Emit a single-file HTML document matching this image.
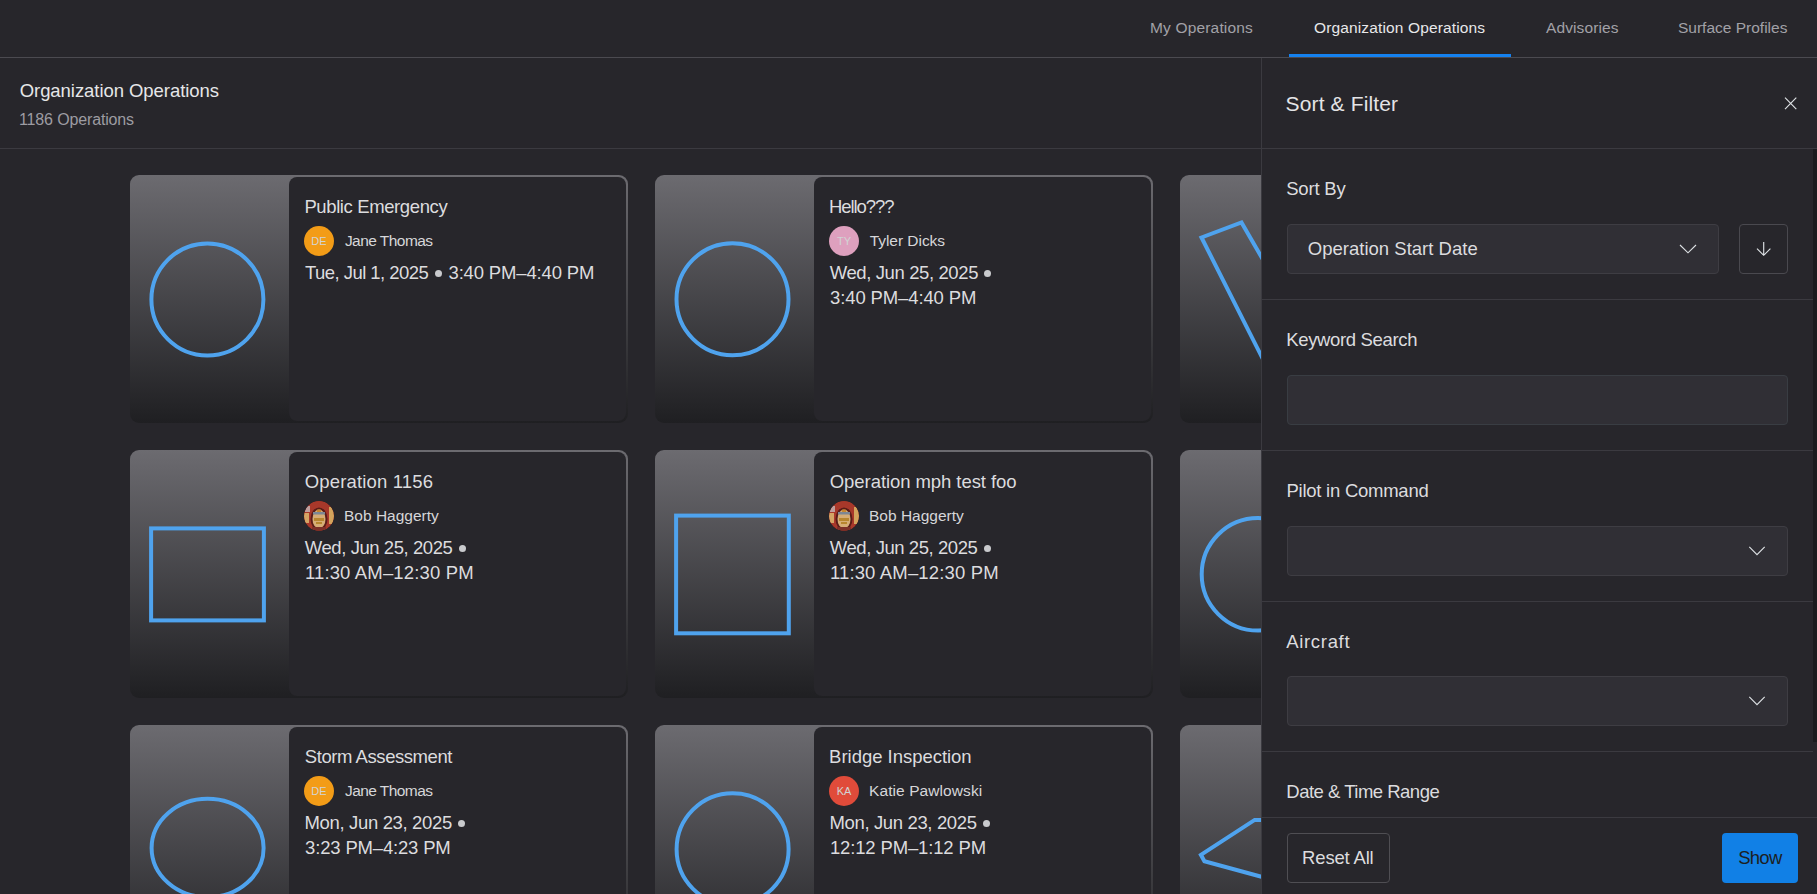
<!DOCTYPE html>
<html><head><meta charset="utf-8"><style>
*{box-sizing:border-box;margin:0;padding:0}
html,body{width:1817px;height:894px;overflow:hidden;background:#27262b;font-family:"Liberation Sans",sans-serif;color:#e2e2e4}
#nav{position:absolute;left:0;top:0;width:1817px;height:58px;border-bottom:1px solid #4b4a50}
#ul{position:absolute;left:1289px;top:54px;width:222px;height:3px;background:#1581ef}
#hdr{position:absolute;left:0;top:58px;width:1817px;height:91px;border-bottom:1px solid #3b3a40}
.card{position:absolute;width:498px;height:248px;border-radius:9px;background:linear-gradient(#6c6b70,#1f1f22);overflow:hidden}
.card svg{position:absolute;left:0;top:0}
.pn{position:absolute;left:159px;top:2px;width:337px;height:244px;border-radius:8px;background:#27262b}
.av{position:absolute;width:30px;height:30px;border-radius:50%;font-size:11px;color:#d2d4d4;text-align:center;line-height:30px;overflow:hidden}
#sb{position:absolute;left:1261px;top:58px;width:556px;height:836px;border-left:1px solid #3b3a40;background:#27262b}
.div{position:absolute;height:1px;background:#3b3a40}
.inp{position:absolute;height:50px;background:#302f35;border:1px solid #3e3d43;border-radius:4px}
#scroll{position:absolute;left:1813px;top:149px;width:4px;height:593px;background:#1b1b1e}
.btn{position:absolute;height:50px;border-radius:4px}
.tx{position:absolute;white-space:nowrap;line-height:1}
</style></head><body>
<div id="nav"></div><div id="ul"></div>
<div id="hdr"></div>
<div class="card" style="left:130px;top:175px"><svg width="159" height="248"><circle cx="77.4" cy="124.45" r="56" fill="none" stroke="#4fa3ee" stroke-width="4"/></svg><div class="pn"></div></div>
<div class="card" style="left:655px;top:175px"><svg width="159" height="248"><circle cx="77.5" cy="124.3" r="56" fill="none" stroke="#4fa3ee" stroke-width="4"/></svg><div class="pn"></div></div>
<div class="card" style="left:1180px;top:175px"><svg width="159" height="248"><polyline points="121.5,151.3 61.5,47.5 21.5,62.5 121.5,260.5" fill="none" stroke="#4fa3ee" stroke-width="4" stroke-linejoin="miter"/></svg></div>
<div class="card" style="left:130px;top:450px"><svg width="159" height="248"><rect x="21.1" y="78.4" width="112.8" height="92" fill="none" stroke="#4fa3ee" stroke-width="4"/></svg><div class="pn"></div></div>
<div class="card" style="left:655px;top:450px"><svg width="159" height="248"><rect x="21.1" y="65.6" width="112.7" height="117.7" fill="none" stroke="#4fa3ee" stroke-width="4"/></svg><div class="pn"></div></div>
<div class="card" style="left:1180px;top:450px"><svg width="159" height="248"><circle cx="78" cy="124.3" r="56.3" fill="none" stroke="#4fa3ee" stroke-width="4"/></svg></div>
<div class="card" style="left:130px;top:725px"><svg width="159" height="248"><ellipse cx="77.6" cy="123" rx="56" ry="49.2" fill="none" stroke="#4fa3ee" stroke-width="4"/></svg><div class="pn"></div></div>
<div class="card" style="left:655px;top:725px"><svg width="159" height="248"><circle cx="77.6" cy="124.2" r="56" fill="none" stroke="#4fa3ee" stroke-width="4"/></svg><div class="pn"></div></div>
<div class="card" style="left:1180px;top:725px"><svg width="159" height="248"><polyline points="200,94.9 74.7,94.9 20.9,129.8 24.4,136.2 200,184.1" fill="none" stroke="#4fa3ee" stroke-width="4" stroke-linejoin="miter"/></svg></div>
<div class="av" style="left:304px;top:226px;background:#f39c17">DE</div>
<div class="av" style="left:829px;top:226px;background:#dea0be">TY</div>
<div class="av" style="left:304px;top:501px"><svg width="30" height="30" viewBox="0 0 30 30"><defs><clipPath id="cp2"><circle cx="15" cy="15" r="15"/></clipPath></defs><g clip-path="url(#cp2)"><rect width="30" height="30" fill="#9a2e20"/><path d="M0,0 H30 V30 H0 Z" fill="#a8382a"/><rect x="1" y="5" width="5" height="6" fill="#c9ccd0" opacity="0.7"/><rect x="0" y="12" width="5" height="10" fill="#d4a565"/><rect x="25" y="6" width="5" height="17" fill="#d3a35c"/><ellipse cx="15" cy="18" rx="8.5" ry="11.5" fill="#5a1c18"/><ellipse cx="15" cy="18" rx="6.5" ry="9.5" fill="#d6ad76"/><rect x="9" y="11" width="12" height="2.5" fill="#7d8794"/><rect x="13" y="8.5" width="4" height="2.5" fill="#c7862e"/><rect x="10" y="17" width="10" height="3" fill="#b8862f"/><rect x="12" y="21" width="6" height="2" fill="#b8862f"/><rect x="8" y="26" width="14" height="4" fill="#7d3028"/></g></svg></div>
<div class="av" style="left:829px;top:501px"><svg width="30" height="30" viewBox="0 0 30 30"><defs><clipPath id="cp3"><circle cx="15" cy="15" r="15"/></clipPath></defs><g clip-path="url(#cp3)"><rect width="30" height="30" fill="#9a2e20"/><path d="M0,0 H30 V30 H0 Z" fill="#a8382a"/><rect x="1" y="5" width="5" height="6" fill="#c9ccd0" opacity="0.7"/><rect x="0" y="12" width="5" height="10" fill="#d4a565"/><rect x="25" y="6" width="5" height="17" fill="#d3a35c"/><ellipse cx="15" cy="18" rx="8.5" ry="11.5" fill="#5a1c18"/><ellipse cx="15" cy="18" rx="6.5" ry="9.5" fill="#d6ad76"/><rect x="9" y="11" width="12" height="2.5" fill="#7d8794"/><rect x="13" y="8.5" width="4" height="2.5" fill="#c7862e"/><rect x="10" y="17" width="10" height="3" fill="#b8862f"/><rect x="12" y="21" width="6" height="2" fill="#b8862f"/><rect x="8" y="26" width="14" height="4" fill="#7d3028"/></g></svg></div>
<div class="av" style="left:304px;top:776px;background:#f39c17">DE</div>
<div class="av" style="left:829px;top:776px;background:#e04b3a">KA</div>

<div id="sb"></div>
<div class="div" style="left:1262px;top:148px;width:555px"></div>

<div class="inp" style="left:1287px;top:224px;width:432px"></div>
<div class="inp" style="left:1739px;top:224px;width:49px;background:transparent;border-color:#4a494f"></div>

<div class="div" style="left:1262px;top:299px;width:551px"></div>
<div class="inp" style="left:1287px;top:375px;width:501px;border-color:#393d43"></div>
<div class="div" style="left:1262px;top:450px;width:551px"></div>
<div class="inp" style="left:1287px;top:526px;width:501px"></div>
<div class="div" style="left:1262px;top:601px;width:551px"></div>
<div class="inp" style="left:1287px;top:676px;width:501px"></div>
<div class="div" style="left:1262px;top:751px;width:551px"></div>
<div id="scroll"></div>
<div class="div" style="left:1262px;top:817px;width:555px"></div>
<div class="btn" style="left:1287px;top:833px;width:103px;border:1px solid #4f4e53"></div>
<div class="btn" style="left:1722px;top:833px;width:76px;background:#1180e6"></div>

<div class="tx" style="left:1150.00px;top:19.59px;font-size:15.50px;letter-spacing:0.167px;color:#a2a1a7">My Operations</div>
<div class="tx" style="left:1314.00px;top:19.51px;font-size:15.50px;letter-spacing:0.136px;color:#e8e8ea">Organization Operations</div>
<div class="tx" style="left:1546.00px;top:19.51px;font-size:15.50px;letter-spacing:0.111px;color:#a2a1a7">Advisories</div>
<div class="tx" style="left:1678.00px;top:19.51px;font-size:15.50px;letter-spacing:0.000px;color:#a2a1a7">Surface Profiles</div>
<div class="tx" style="left:19.70px;top:82.17px;font-size:18.50px;letter-spacing:-0.055px;color:#e6e6e8">Organization Operations</div>
<div class="tx" style="left:19.00px;top:112.36px;font-size:16.00px;letter-spacing:-0.143px;color:#9d9ca2">1186 Operations</div>
<div class="tx" style="left:1285.60px;top:92.62px;font-size:21.00px;letter-spacing:0.133px;color:#e4e4e6">Sort &amp; Filter</div>
<div class="tx" style="left:1286.20px;top:179.76px;font-size:18.50px;letter-spacing:-0.200px;color:#dcdcdf">Sort By</div>
<div class="tx" style="left:1307.80px;top:239.86px;font-size:18.50px;letter-spacing:0.011px;color:#dcdcdf">Operation Start Date</div>
<div class="tx" style="left:1286.30px;top:330.81px;font-size:18.50px;letter-spacing:-0.354px;color:#dcdcdf">Keyword Search</div>
<div class="tx" style="left:1286.50px;top:481.85px;font-size:18.50px;letter-spacing:-0.253px;color:#dcdcdf">Pilot in Command</div>
<div class="tx" style="left:1286.20px;top:633.06px;font-size:18.50px;letter-spacing:0.686px;color:#dcdcdf">Aircraft</div>
<div class="tx" style="left:1286.30px;top:782.78px;font-size:18.50px;letter-spacing:-0.500px;color:#dcdcdf">Date &amp; Time Range</div>
<div class="tx" style="left:1302.10px;top:848.77px;font-size:18.50px;letter-spacing:-0.175px;color:#dcdcdf">Reset All</div>
<div class="tx" style="left:1738.20px;top:849.19px;font-size:18.50px;letter-spacing:-0.733px;color:#1d1e22">Show</div>
<div class="tx" style="left:304.40px;top:198.16px;font-size:18.50px;letter-spacing:-0.387px;color:#dcdcdf">Public Emergency</div>
<div class="tx" style="left:344.90px;top:233.21px;font-size:15.50px;letter-spacing:-0.540px;color:#d6d6d9">Jane Thomas</div>
<div class="tx" style="left:305.00px;top:264.21px;font-size:18.50px;letter-spacing:-0.547px;color:#dcdcdf">Tue, Jul 1, 2025</div>
<div class="tx" style="left:448.50px;top:264.21px;font-size:18.50px;letter-spacing:-0.157px;color:#dcdcdf">3:40 PM–4:40 PM</div>
<div class="tx" style="left:829.10px;top:198.16px;font-size:18.50px;letter-spacing:-1.086px;color:#dcdcdf">Hello???</div>
<div class="tx" style="left:869.70px;top:233.21px;font-size:15.50px;letter-spacing:-0.040px;color:#d6d6d9">Tyler Dicks</div>
<div class="tx" style="left:829.70px;top:264.21px;font-size:18.50px;letter-spacing:-0.388px;color:#dcdcdf">Wed, Jun 25, 2025</div>
<div class="tx" style="left:830.10px;top:289.24px;font-size:18.50px;letter-spacing:-0.129px;color:#dcdcdf">3:40 PM–4:40 PM</div>
<div class="tx" style="left:304.80px;top:473.16px;font-size:18.50px;letter-spacing:0.154px;color:#dcdcdf">Operation 1156</div>
<div class="tx" style="left:344.00px;top:508.21px;font-size:15.50px;letter-spacing:0.000px;color:#d6d6d9">Bob Haggerty</div>
<div class="tx" style="left:304.80px;top:539.21px;font-size:18.50px;letter-spacing:-0.431px;color:#dcdcdf">Wed, Jun 25, 2025</div>
<div class="tx" style="left:304.90px;top:564.24px;font-size:18.50px;letter-spacing:0.150px;color:#dcdcdf">11:30 AM–12:30 PM</div>
<div class="tx" style="left:829.80px;top:473.16px;font-size:18.50px;letter-spacing:-0.067px;color:#dcdcdf">Operation mph test foo</div>
<div class="tx" style="left:869.00px;top:508.21px;font-size:15.50px;letter-spacing:0.000px;color:#d6d6d9">Bob Haggerty</div>
<div class="tx" style="left:829.80px;top:539.21px;font-size:18.50px;letter-spacing:-0.431px;color:#dcdcdf">Wed, Jun 25, 2025</div>
<div class="tx" style="left:829.90px;top:564.24px;font-size:18.50px;letter-spacing:0.150px;color:#dcdcdf">11:30 AM–12:30 PM</div>
<div class="tx" style="left:304.80px;top:748.16px;font-size:18.50px;letter-spacing:-0.440px;color:#dcdcdf">Storm Assessment</div>
<div class="tx" style="left:345.00px;top:783.21px;font-size:15.50px;letter-spacing:-0.560px;color:#d6d6d9">Jane Thomas</div>
<div class="tx" style="left:304.50px;top:814.21px;font-size:18.50px;letter-spacing:-0.344px;color:#dcdcdf">Mon, Jun 23, 2025</div>
<div class="tx" style="left:305.10px;top:839.24px;font-size:18.50px;letter-spacing:-0.171px;color:#dcdcdf">3:23 PM–4:23 PM</div>
<div class="tx" style="left:829.10px;top:748.16px;font-size:18.50px;letter-spacing:-0.025px;color:#dcdcdf">Bridge Inspection</div>
<div class="tx" style="left:869.00px;top:783.21px;font-size:15.50px;letter-spacing:0.086px;color:#d6d6d9">Katie Pawlowski</div>
<div class="tx" style="left:829.50px;top:814.21px;font-size:18.50px;letter-spacing:-0.362px;color:#dcdcdf">Mon, Jun 23, 2025</div>
<div class="tx" style="left:829.90px;top:839.24px;font-size:18.50px;letter-spacing:-0.147px;color:#dcdcdf">12:12 PM–1:12 PM</div>
<div style="position:absolute;left:435.10px;top:269.90px;width:7px;height:7px;border-radius:50%;background:#c9cacd"></div>
<div style="position:absolute;left:984.40px;top:269.90px;width:7px;height:7px;border-radius:50%;background:#c9cacd"></div>
<div style="position:absolute;left:459.40px;top:544.90px;width:7px;height:7px;border-radius:50%;background:#c9cacd"></div>
<div style="position:absolute;left:984.40px;top:544.90px;width:7px;height:7px;border-radius:50%;background:#c9cacd"></div>
<div style="position:absolute;left:458.40px;top:819.90px;width:7px;height:7px;border-radius:50%;background:#c9cacd"></div>
<div style="position:absolute;left:983.40px;top:819.90px;width:7px;height:7px;border-radius:50%;background:#c9cacd"></div>
<svg style="position:absolute;left:0;top:0" width="1817" height="894" viewBox="0 0 1817 894">
<g fill="none" stroke="#dde1e4" stroke-width="1.15" stroke-linecap="butt">
<path d="M1785,97.6 L1796.3,109.2 M1796.3,97.6 L1785,109.2"/>
<path d="M1680,245 L1688,252.8 L1696,245"/>
<path d="M1763.7,242 V255.2 M1757,248.6 L1763.7,255.3 L1770.4,248.6"/>
<path d="M1749.3,546.8 L1757,554.6 L1764.7,546.8"/>
<path d="M1749.3,696.8 L1757,704.6 L1764.7,696.8"/>
</g></svg>
</body></html>
